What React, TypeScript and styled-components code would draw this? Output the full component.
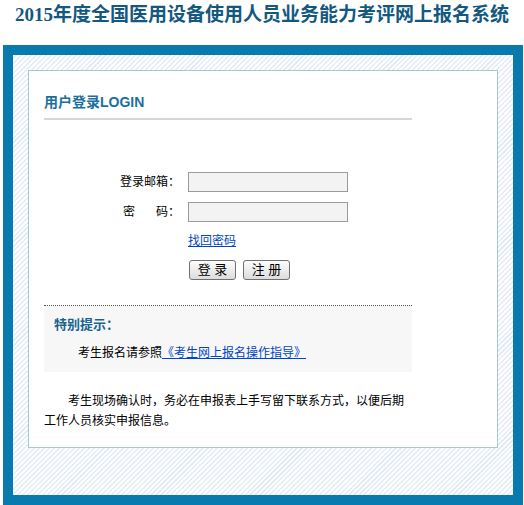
import styled, { createGlobalStyle } from "styled-components";

const GlobalStyle = createGlobalStyle`
  body {
    margin: 0;
    background: #ffffff;
    font-family: "Liberation Sans", "Noto Sans CJK SC", sans-serif;
    font-size: 12px;
    color: #000000;
  }
`;

const FONT = `"Liberation Sans", "Noto Sans CJK SC", sans-serif`;

const App = () => {
  return (
    <>
      <GlobalStyle />
      <Title>
        2015年度全国医用设备使用人员业务能力考评网上报名系统
      </Title>
      <Frame>
        <Hatch>
          <Panel>
            <Content>
              <Heading>用户登录LOGIN</Heading>
              <Form>
                <Label>登录邮箱：</Label>
                <Input type="text" />
                <Label>
                  密<Spacer />码：
                </Label>
                <Input type="password" />
                <Cell>
                  <BlueLink href="#">找回密码</BlueLink>
                </Cell>
                <ButtonRow>
                  <Button>登 录</Button>
                  <Button>注 册</Button>
                </ButtonRow>
              </Form>
              <Notice>
                <NoticeTitle>特别提示：</NoticeTitle>
                <NoticeText>
                  考生报名请参照
                  <BlueLink href="#">《考生网上报名操作指导》</BlueLink>
                </NoticeText>
              </Notice>
              <Paragraph>
                考生现场确认时，务必在申报表上手写留下联系方式，以便后期工作人员核实申报信息。
              </Paragraph>
            </Content>
          </Panel>
        </Hatch>
      </Frame>
    </>
  );
};

const Title = styled.h1`
  margin: 0;
  height: 45px;
  padding-top: 1px;
  box-sizing: border-box;
  text-align: center;
  font-family: "Liberation Serif", "Noto Sans CJK SC", serif;
  font-size: 19px;
  font-weight: bold;
  line-height: 28px;
  color: #13597f;
  white-space: nowrap;
`;

const Frame = styled.div`
  margin-left: 3px;
  width: 520px;
  box-sizing: border-box;
  border: 10px solid #087aae;
`;

const Hatch = styled.div`
  padding: 15px 15px 47px 15px;
  background-color: #ffffff;
  background-image: repeating-linear-gradient(
    135deg,
    #ffffff 0px,
    #ffffff 2px,
    #e4edf7 2px,
    #e4edf7 3.5px
  );
`;

const Panel = styled.div`
  width: 470px;
  box-sizing: border-box;
  border: 1px solid #a9c8d5;
  background: #ffffff;
  padding: 0 15px 16px 15px;
`;

const Content = styled.div`
  width: 368px;
  display: flex;
  flex-direction: column;
`;

const Heading = styled.div`
  margin-top: 16px;
  height: 31px;
  line-height: 31px;
  font-family: ${FONT};
  font-size: 14px;
  font-weight: bold;
  color: #1a6fa0;
  border-bottom: 2px solid #d6d6d6;
`;

const Form = styled.div`
  display: grid;
  grid-template-columns: 136px 160px;
  column-gap: 8px;
  grid-template-rows: 20px 20px 18px 20px;
  row-gap: 10px;
  margin-top: 52px;
  align-items: center;
`;

const Label = styled.label`
  text-align: right;
  font-size: 12px;
  line-height: 20px;
  white-space: nowrap;
`;

const Spacer = styled.span`
  display: inline-block;
  width: 21px;
`;

const Input = styled.input`
  width: 160px;
  height: 20px;
  box-sizing: border-box;
  margin: 0;
  border: 1px solid #9a9a9a;
  background: #f3f3f3;
  padding: 0 3px;
  font-size: 12px;
`;

const Cell = styled.div`
  grid-column: 2;
  line-height: 18px;
`;

const BlueLink = styled.a`
  color: #0046c8;
  text-decoration: underline;
  font-size: 12px;
`;

const ButtonRow = styled.div`
  grid-column: 2;
  display: flex;
  gap: 7px;
  padding-left: 1px;
`;

const Button = styled.button`
  width: 47px;
  height: 20px;
  margin: 0;
  padding: 0;
  border: 1px solid #707070;
  border-radius: 3px;
  background: linear-gradient(#fdfdfd, #dcdcdc);
  font-family: ${FONT};
  font-size: 13px;
  line-height: 18px;
  color: #000000;
  white-space: pre;
`;

const Notice = styled.div`
  margin-top: 25px;
  border-top: 1px dotted #555555;
  background: #f7f7f7;
  height: 67px;
  box-sizing: border-box;
  padding: 10px 10px 0 10px;
`;

const NoticeTitle = styled.div`
  font-size: 13px;
  font-weight: bold;
  color: #17648f;
  line-height: 18px;
`;

const NoticeText = styled.div`
  margin-top: 10px;
  padding-left: 24px;
  line-height: 18px;
`;

const Paragraph = styled.p`
  margin: 19px 0 0 0;
  text-indent: 24px;
  line-height: 20px;
  font-size: 12px;
`;

export default App;
